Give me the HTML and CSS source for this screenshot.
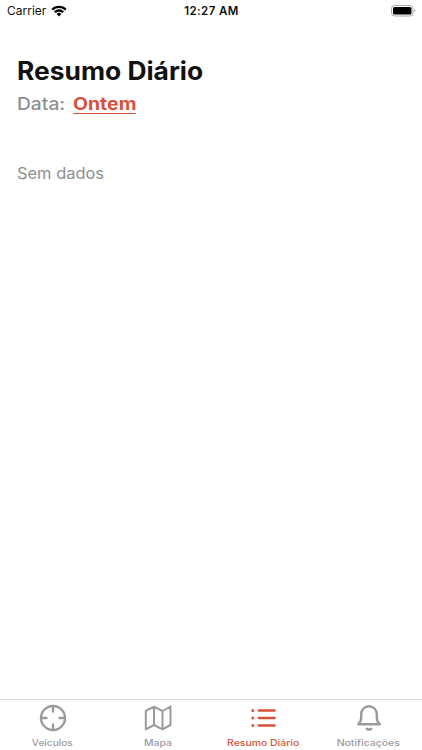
FILE: index.html
```
<!DOCTYPE html>
<html lang="pt">
<head>
<meta charset="utf-8">
<meta name="viewport" content="width=device-width, initial-scale=1">
<title>Resumo Diário</title>
<link rel="stylesheet" href="styles.css">
</head>
<body>
<div class="screen">
  <header class="status">
    <div class="carrier"><span>Carrier</span>
      <svg width="16" height="12" viewBox="0 0 16 12"><path d="M.4 3.8a10.8 10.8 0 0 1 15.2 0L13.9 5.500a8.350 8.350 0 0 0-11.800 0zM3 6.400a7.100 7.100 0 0 1 10 0L11.300 8.100a4.650 4.650 0 0 0-6.600 0zM5.600 9a3.400 3.400 0 0 1 4.800 0L8 11.400z"/></svg>
    </div>
    <div class="clock">12:27 AM</div>
    <div class="power">
      <svg width="25" height="12" viewBox="0 0 25 12"><rect x=".5" y=".5" width="21.500" height="10.500" rx="3" fill="none" stroke="#a8a8a8"/><rect x="2" y="2" width="18.500" height="7.500" rx="1.600"/><path d="M23.300 4v3.500q1.200-.5 1.200-1.750T23.300 4z" fill="#a8a8a8"/></svg>
    </div>
  </header>
  <main class="content">
    <h1>Resumo Diário</h1>
    <div class="date"><span class="label">Data:</span><a class="value"><span>Ontem</span></a></div>
    <p class="empty">Sem dados</p>
  </main>
  <nav class="tabs">
    <div class="tab">
      <svg width="28" height="28" viewBox="0 0 28 28"><circle cx="14" cy="14" r="12"/><path d="M14 2v5.500M14 20.500V26M2 14h5.500M20.500 14H26"/></svg>
      <span class="t1">Veículos</span>
    </div>
    <div class="tab">
      <svg class="thin" width="28" height="28" viewBox="0 0 28 28"><path d="M1.800 6.800v18.500L10 21l8.500 4.300L26.500 21V2.500L18.500 7 10 2.700zM10 2.700V21M18.500 7v18.300"/></svg>
      <span class="t2">Mapa</span>
    </div>
    <div class="tab active">
      <svg width="28" height="28" viewBox="0 0 28 28"><path d="M9.800 6.500h15.800M9.800 14h15.800M9.800 21.500h15.800"/><path class="dots" d="M3.800 6.500h.01M3.800 14h.01M3.800 21.500h.01"/></svg>
      <span class="t3">Resumo Diário</span>
    </div>
    <div class="tab">
      <svg width="28" height="28" viewBox="0 0 28 28"><path d="M3.200 20.200h21.600c-2.200-1.700-3-3.700-3-6.700V10a7.800 7.800 0 0 0-15.600 0v3.500c0 3-.8 5-3 6.700z"/><path d="M11.800 24.700q2.200 1.800 4.400 0"/></svg>
      <span class="t4">Notificações</span>
    </div>
  </nav>
</div>
</body>
</html>
```
FILE: styles.css
```
* { box-sizing: border-box; }
body { margin: 0; background: #fff; font-family: Inter, "Liberation Sans", sans-serif; }
svg { display: block; }
.screen { width: 422px; height: 750px; display: flex; flex-direction: column; }
.status { height: 22px; display: grid; grid-template-columns: 1fr auto 1fr; align-items: center; padding: 0 6px 0 7px; color: #111; font-size: 12px; line-height: 22px; }
.carrier { display: flex; align-items: center; gap: 5px; }
.carrier svg { fill: #000; }
.clock { font-size: 11.500px; font-weight: 600; letter-spacing: .4px; }
.power { display: flex; justify-content: flex-end; }
.content { flex: 1; padding: 33px 17px 0; }
h1 { width: max-content; margin: 0; font-size: 25px; line-height: 32px; font-weight: 650; color: #111; transform: scaleX(1.055); transform-origin: left; }
.date { display: flex; margin-top: 6px; font-size: 17px; line-height: 23px; }
.label { width: 55.500px; color: #8e9092; font-weight: 450; transform: scaleX(1.13); transform-origin: left; }
.value { width: 63px; height: 21px; color: #d8513b; font-weight: 650; border-bottom: 1px solid #d8513b; }
.value span { display: inline-block; transform: scaleX(1.145); transform-origin: left; }
.empty { width: max-content; margin: 47px 0 0; font-size: 15.500px; line-height: 22px; color: #8e9092; transform: scaleX(1.06); transform-origin: left; }
.tabs { height: 51px; border-top: 1px solid #dcdcdc; display: grid; grid-template-columns: repeat(4, 105.330px); }
.tab { display: flex; flex-direction: column; align-items: center; padding-top: 4px; color: #999b9f; font-size: 9px; line-height: 14px; font-weight: 500; }
.tab span { margin-top: 4px; white-space: nowrap; transform: scaleX(1.16); }
.tab .t1 { transform: scaleX(1.12); }
.tab svg { fill: none; stroke: currentColor; stroke-width: 2.400; stroke-linecap: round; stroke-linejoin: round; }
.tab .thin { stroke-width: 2; }
.tab .dots { stroke-width: 3; }
.tab.active { color: #d8513b; }
```
